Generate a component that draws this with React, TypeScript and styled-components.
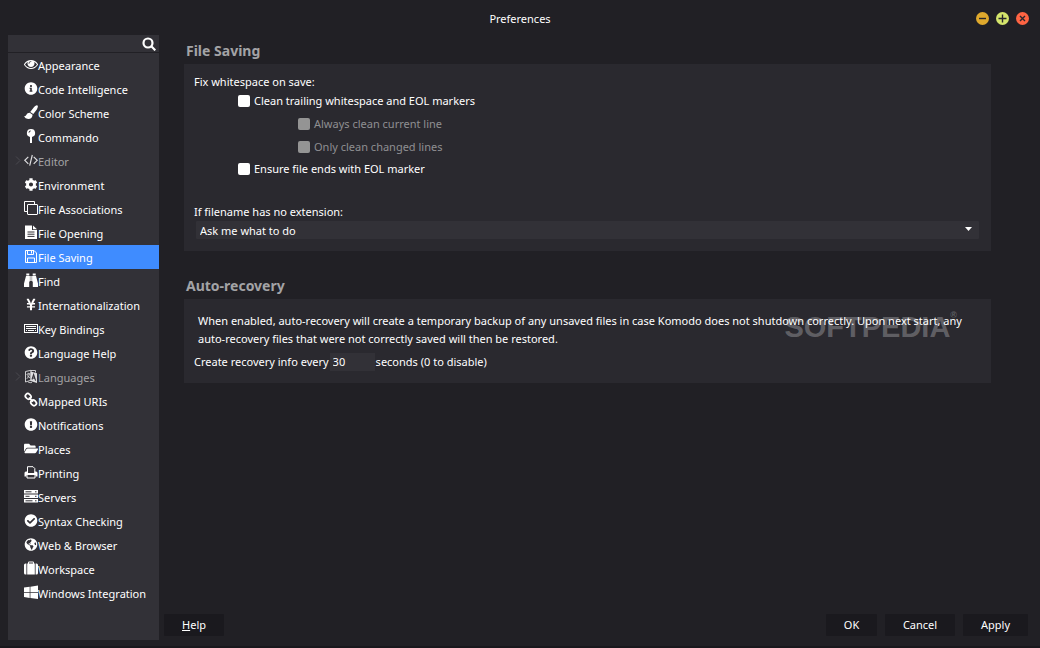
import React from "react";
import styled, { createGlobalStyle } from "styled-components";
import {
  FaInfoCircle, FaCog, FaYenSign, FaQuestionCircle, FaExclamationCircle,
  FaFolderOpen, FaCheckCircle, FaGlobeAmericas,
} from "react-icons/fa";

const color = {
  page: "#212025",
  side: "#323137",
  panel: "#2a292f",
  field: "#323137",
  button: "#1a191e",
  accent: "#3f8cff",
  text: "#ffffff",
  muted: "#a3a3a5",
  heading: "#a3a3a6",
};

const Global = createGlobalStyle`
  *, *::before, *::after { box-sizing: border-box; }
  body {
    margin: 0;
    background: ${color.page};
    color: ${color.text};
    font-family: "Noto Sans", "Open Sans", sans-serif;
    font-size: 11px;
    line-height: 18px;
  }
  button, input, select { font: inherit; color: inherit; }
`;

const Window = styled.div`
  display: flex;
  flex-direction: column;
  min-height: 100vh;
  border-bottom: 2px solid #19181d;
`;

const TitleBar = styled.header`
  display: grid;
  grid-template-columns: 1fr auto 1fr;
  align-items: center;
  height: 35px;
  padding: 2px 11px 0 11px;
`;

const Title = styled.h1`
  grid-column: 2;
  margin: 0;
  font-size: 11px;
  font-weight: 400;
`;

const WindowButtons = styled.div`
  display: flex;
  justify-content: flex-end;
  gap: 7px;
`;

const WindowButton = styled.button<{ $fill: string }>`
  display: flex;
  width: 13px;
  height: 13px;
  padding: 0;
  border: 0;
  border-radius: 50%;
  background: ${(p) => p.$fill};
  svg { width: 13px; height: 13px; fill: none; stroke: #28272c; stroke-width: 1.4; }
`;

const Body = styled.div`
  display: flex;
  flex: 1;
  gap: 5px;
  padding: 0 12px 6px 8px;
`;

const Sidebar = styled.aside`
  width: 151px;
  flex: none;
  background: ${color.side};
`;

const SearchBox = styled.label`
  display: flex;
  align-items: center;
  height: 18px;
  padding: 1px 3px 0 4px;
  border-bottom: 1px solid ${color.page};
  svg { flex: none; width: 14px; height: 14px; fill: none; stroke: #fff; stroke-width: 2.2; }
`;

const SearchInput = styled.input`
  flex: 1;
  min-width: 0;
  height: 16px;
  padding: 0;
  border: 0;
  outline: 0;
  background: transparent;
`;

const CategoryList = styled.ul`
  margin: 0;
  padding: 0;
  list-style: none;
`;

const Category = styled.a<{ $selected?: boolean; $muted?: boolean }>`
  display: flex;
  align-items: center;
  height: 24px;
  padding-top: 2px;
  color: ${(p) => (p.$muted ? color.muted : color.text)};
  background: ${(p) => (p.$selected ? color.accent : "transparent")};
  text-decoration: none;
  white-space: nowrap;
`;

const Twisty = styled.span`
  display: flex;
  width: 16px;
  padding: 0 0 4px 7px;
  svg { width: 6px; height: 9px; fill: none; stroke: #4b4a50; }
`;

const IconSlot = styled.span<{ $muted?: boolean }>`
  display: flex;
  justify-content: center;
  width: 14px;
  padding-bottom: 3px;
  color: ${(p) => (p.$muted ? "#dedee0" : color.text)};
  svg { flex: none; width: 14px; height: 13px; overflow: visible; }
`;

const Main = styled.main`
  display: flex;
  flex: 1;
  flex-direction: column;
  min-width: 0;
`;

const Sections = styled.div`
  display: flex;
  flex: 1;
  flex-direction: column;
  gap: 23px;
  padding: 4px 37px 0 20px;
`;

const Heading = styled.h2`
  margin: 0 0 2px;
  padding-left: 2px;
  color: ${color.heading};
  font-size: 14px;
  font-weight: 700;
  line-height: 23px;
`;

const Panel = styled.div`
  position: relative;
  padding: 9px 12px 12px 10px;
  background: ${color.panel};
`;

const Fieldset = styled.fieldset`
  display: flex;
  flex-direction: column;
  align-items: flex-start;
  margin: 0 0 23px;
  padding: 0;
  border: 0;
`;

const Legend = styled.legend`
  padding: 0;
  line-height: 17px;
`;

const CheckRow = styled.label<{ $nested?: boolean }>`
  display: flex;
  align-items: center;
  gap: 4px;
  height: ${(p) => (p.$nested ? 23 : 22)}px;
  margin-left: ${(p) => (p.$nested ? 104 : 44)}px;
  color: ${(p) => (p.$nested ? "#8f8f92" : color.text)};
`;

const CheckBox = styled.input`
  appearance: none;
  width: 12px;
  height: 12px;
  margin: 0;
  border-radius: 2px;
  background: #fff;
  &:disabled { background: #949494; }
  &:checked { box-shadow: inset 0 0 0 3px #fff; background: ${color.accent}; }
`;

const SelectLabel = styled.label`
  display: block;
`;

const SelectWrap = styled.div`
  display: flex;
  align-items: center;
  margin: 0 0 0 2px;
  background: ${color.field};
  border-radius: 1px;
  svg { flex: none; width: 7px; height: 4px; margin: 0 7px 2px -14px; fill: #fff; pointer-events: none; }
`;

const Select = styled.select`
  appearance: none;
  flex: 1;
  height: 18px;
  padding: 1px 20px 0 4px;
  border: 0;
  outline: 0;
  background: transparent;
`;

const Note = styled.p`
  position: relative;
  z-index: 1;
  margin: 4px 0 5px 4px;
`;

const IntervalRow = styled.div`
  display: flex;
  align-items: center;
  gap: 1px;
`;

const NumberInput = styled.input`
  width: 45px;
  height: 18px;
  padding: 0 3px;
  border: 0;
  outline: 0;
  background: ${color.field};
`;

const Watermark = styled.div`
  position: absolute;
  right: 34px;
  top: 8px;
  display: flex;
  color: rgba(255, 255, 255, 0.26);
  font-family: "Liberation Sans", Arial, sans-serif;
  font-size: 29px;
  font-weight: 700;
  line-height: 40px;
  pointer-events: none;
  sup { font-size: 9px; line-height: 16px; }
`;

const Footer = styled.footer`
  display: flex;
  gap: 8px;
  padding-bottom: 4px;
`;

const Spacer = styled.div`
  flex: 1;
`;

const DialogButton = styled.button<{ $width: number }>`
  width: ${(p) => p.$width}px;
  height: 22px;
  padding: 0;
  border: 0;
  border-radius: 1px;
  background: ${color.button};
`;

const EyeIcon = () => (
  <svg viewBox="0 128 1792 1664" fill="currentColor">
    <path d="M1664 960q-152-236-381-353 61 104 61 225 0 185-131.500 316.500t-316.500 131.500-316.500-131.500-131.500-316.500q0-121 61-225-229 117-381 353 133 205 333.500 326.500t434.500 121.500 434.500-121.500 333.500-326.500zm-720-384q0-20-14-34t-34-14q-125 0-214.500 89.500t-89.500 214.500q0 20 14 34t34 14 34-14 14-34q0-86 61-147t147-61q20 0 34-14t14-34zm848 384q0 34-20 69-140 230-376.500 368.500t-499.500 138.500-499.500-139-376.500-368q-20-35-20-69t20-69q140-229 376.500-368t499.500-139 499.500 139 376.500 368q20 35 20 69z" />
  </svg>
);

const BrushIcon = () => (
  <svg viewBox="0 0 14 13" fill="currentColor">
    <path d="M12.200-.6Q13.900-.9 13.900.6 13.800 1.800 12.800 3.400L9.300 8 6.200 6 9.900 1.200Q11.200-.3 12.200-.6zM5.700 6.700L8.600 8.700Q8.300 12.900 4.200 12.900 1.200 12.800 0 10.200 1.500 10.500 2.200 9 3.200 6.700 5.700 6.700z" />
  </svg>
);

const PinIcon = () => (
  <svg viewBox="0 0 14 13" fill="currentColor">
    <path fillRule="evenodd" d="M7 -1a4 4 0 0 1 1 7.900V13H6V6.900A4 4 0 0 1 7 -1zM6.800 .5A2.400 2.400 0 0 0 4.500 2.800h.8A1.600 1.600 0 0 1 6.800 1.200z" />
  </svg>
);

const CodeIcon = () => (
  <svg viewBox="0 0 14 13" fill="none" stroke="currentColor" strokeWidth="1.200">
    <path d="M4.300 2.800L.8 6.300l3.500 3.500M9.700 2.800l3.500 3.500-3.500 3.500M8.300 1L5.700 11.600" />
  </svg>
);

const CloneIcon = () => (
  <svg viewBox="0 0 14 13" fill="none" stroke="currentColor">
    <path d="M3.500 9.500h-3v-10h10v3" />
    <rect x="3.500" y="2.500" width="10" height="10" rx="0.500" />
  </svg>
);

const FileIcon = () => (
  <svg viewBox="0 0 14 13">
    <path d="M1-.5h7v4.500h5v9H1zM9-.5l4 3.700H9z" fill="currentColor" />
    <path d="M3.500 6h7M3.500 8.200h7M3.500 10.400h7" stroke={color.side} />
  </svg>
);

const FloppyIcon = () => (
  <svg viewBox="0 0 14 13" fill="none" stroke="currentColor">
    <path d="M1.500 .5h8.500l2.500 2.500v9.500h-11zM3.500 .5v4h6v-4M3.500 12.500v-4.500h7v4.500" />
    <path d="M7.500 1v2.500" />
  </svg>
);

const BinocularsIcon = () => (
  <svg viewBox="0 0 14 13" fill="currentColor">
    <path d="M2.300-.5h3v2h-3zM8.700-.5h3v2h-3zM2 2h3.900v5.500H5.200V13H0V9.500zM12 2H8.100v5.500h.7V13H14V9.500zM6.300 2h1.400v5H6.300z" />
  </svg>
);

const KeyboardIcon = () => (
  <svg viewBox="0 0 14 13" fill="none" stroke="currentColor">
    <rect x="0.500" y="2.500" width="13" height="8" />
    <path d="M2 4.500h10M2 6.500h10M4 8.500h6M2 8.500h1M11 8.500h1" />
  </svg>
);

const LanguageIcon = () => (
  <svg viewBox="0 0 14 13">
    <path d="M1.500 1.500L7 .3v9.900L1.500 12zM7 .5h4.500v2" fill="none" stroke="currentColor" strokeWidth="0.900" />
    <path d="M2.500 4.500l3.500-1M4.200 2.800v1.500M5.500 4Q5 7 2.800 8.800M3 5.500l3 2.500" fill="none" stroke="currentColor" strokeWidth="0.800" />
    <path d="M6.500 1.500L13 3.300v9.700L6.500 11z" fill="currentColor" />
    <path d="M8 9.500L9.600 4.500 11.600 10.700M8.500 7.800l2.400.7" fill="none" stroke={color.side} strokeWidth="1.100" />
    <path d="M4 12q2 1.200 4 .5" fill="none" stroke="currentColor" strokeWidth="0.800" />
  </svg>
);

const ChainIcon = () => (
  <svg viewBox="0 0 14 13" fill="none" stroke="currentColor" strokeWidth="1.700">
    <rect x="1.200" y="0" width="6" height="4.800" rx="2.400" transform="rotate(45 4.200 2.400)" />
    <rect x="6.600" y="6.400" width="6" height="4.800" rx="2.400" transform="rotate(45 9.600 8.800)" />
    <path d="M4.800 3.600l4.300 4" />
  </svg>
);

const PrintIcon = () => (
  <svg viewBox="0 0 14 13">
    <path d="M3.500 7V.7h5.500l1.800 1.800V7" fill="none" stroke="currentColor" />
    <path d="M2 5.500h1.500V7h7V5.500H12q1.500 0 1.500 1.500v3.500h-2V9H2.500v1.500h-2V7Q.5 5.500 2 5.500z" fill="currentColor" />
    <path d="M3 9v3h8V9" fill="none" stroke="currentColor" />
  </svg>
);

const ServersIcon = () => (
  <svg viewBox="0 0 14 13">
    <path d="M0 0h14v3.500H0zM0 4.500h14V8H0zM0 9h14v3.500H0z" fill="currentColor" />
    <path d="M1.500 1.800h6M1.500 6.300h4M1.500 10.800h7M11 1.800h1.500M11 6.300h1.500M11 10.800h1.500" stroke={color.side} />
  </svg>
);

const SuitcaseIcon = () => (
  <svg viewBox="0 0 14 13" fill="currentColor">
    <path d="M4 1.500V.8Q4-.5 5.300-.5h3.400Q10-.5 10 .8v.7H9V.5H5v1zM3.200 1.500h7.600v11H3.200zM2.400 1.500v11H1.500Q0 12.500 0 11V3q0-1.500 1.500-1.500zM11.600 1.500v11h.9q1.500 0 1.500-1.500V3q0-1.500-1.500-1.500z" />
  </svg>
);

const WindowsIcon = () => (
  <svg viewBox="0 0 14 13" fill="currentColor">
    <path d="M0 1.600L5.700.8V6H0zM6.400.7L14-.4V6H6.400zM0 6.700h5.700v5.200L0 11.100zM6.400 6.700H14v6.400L6.400 12z" />
  </svg>
);

const TwistyIcon = () => (
  <svg viewBox="0 0 6 9"><path d="M1 .5l4 4-4 4" /></svg>
);

type Item = { label: string; icon: React.ComponentType; parent?: boolean };

const items: Item[] = [
  { label: "Appearance", icon: EyeIcon },
  { label: "Code Intelligence", icon: FaInfoCircle },
  { label: "Color Scheme", icon: BrushIcon },
  { label: "Commando", icon: PinIcon },
  { label: "Editor", icon: CodeIcon, parent: true },
  { label: "Environment", icon: FaCog },
  { label: "File Associations", icon: CloneIcon },
  { label: "File Opening", icon: FileIcon },
  { label: "File Saving", icon: FloppyIcon },
  { label: "Find", icon: BinocularsIcon },
  { label: "Internationalization", icon: FaYenSign },
  { label: "Key Bindings", icon: KeyboardIcon },
  { label: "Language Help", icon: FaQuestionCircle },
  { label: "Languages", icon: LanguageIcon, parent: true },
  { label: "Mapped URIs", icon: ChainIcon },
  { label: "Notifications", icon: FaExclamationCircle },
  { label: "Places", icon: FaFolderOpen },
  { label: "Printing", icon: PrintIcon },
  { label: "Servers", icon: ServersIcon },
  { label: "Syntax Checking", icon: FaCheckCircle },
  { label: "Web & Browser", icon: FaGlobeAmericas },
  { label: "Workspace", icon: SuitcaseIcon },
  { label: "Windows Integration", icon: WindowsIcon },
];

export default function App() {
  return (
    <Window>
      <Global />
      <TitleBar>
        <Title>Preferences</Title>
        <WindowButtons>
          <WindowButton $fill="#dfa92d" aria-label="Minimize">
            <svg viewBox="0 0 13 13"><path d="M3 6.500h7" /></svg>
          </WindowButton>
          <WindowButton $fill="#d5e56c" aria-label="Maximize">
            <svg viewBox="0 0 13 13"><path d="M2.500 6.500h8M6.500 2.500v8" /></svg>
          </WindowButton>
          <WindowButton $fill="#ff6443" aria-label="Close">
            <svg viewBox="0 0 13 13"><path d="M4 4l5 5M9 4l-5 5" /></svg>
          </WindowButton>
        </WindowButtons>
      </TitleBar>
      <Body>
        <Sidebar>
          <SearchBox>
            <SearchInput type="text" aria-label="Search preferences" />
            <svg viewBox="0 0 14 14"><circle cx="6" cy="6" r="4.500" /><path d="M9.300 9.300l4 4" /></svg>
          </SearchBox>
          <CategoryList>
            {items.map(({ label, icon: Icon, parent }) => (
              <li key={label}>
                <Category href="#" $selected={label === "File Saving"} $muted={parent}>
                  <Twisty>{parent && <TwistyIcon />}</Twisty>
                  <IconSlot $muted={parent}><Icon /></IconSlot>
                  {label}
                </Category>
              </li>
            ))}
          </CategoryList>
        </Sidebar>
        <Main>
          <Sections>
            <section>
              <Heading>File Saving</Heading>
              <Panel>
                <Fieldset>
                  <Legend>Fix whitespace on save:</Legend>
                  <CheckRow><CheckBox type="checkbox" />Clean trailing whitespace and EOL markers</CheckRow>
                  <CheckRow $nested><CheckBox type="checkbox" disabled />Always clean current line</CheckRow>
                  <CheckRow $nested><CheckBox type="checkbox" disabled />Only clean changed lines</CheckRow>
                  <CheckRow><CheckBox type="checkbox" />Ensure file ends with EOL marker</CheckRow>
                </Fieldset>
                <SelectLabel htmlFor="no-extension">If filename has no extension:</SelectLabel>
                <SelectWrap>
                  <Select id="no-extension"><option>Ask me what to do</option></Select>
                  <svg viewBox="0 0 7 4"><path d="M0 0h7L3.500 4z" /></svg>
                </SelectWrap>
              </Panel>
            </section>
            <section>
              <Heading>Auto-recovery</Heading>
              <Panel>
                <Watermark>SOFTPEDIA<sup>®</sup></Watermark>
                <Note>
                  When enabled, auto-recovery will create a temporary backup of any unsaved files in case Komodo does not shutdown correctly. Upon next start, any auto-recovery files that were not correctly saved will then be restored.
                </Note>
                <IntervalRow>
                  <label htmlFor="interval">Create recovery info every</label>
                  <NumberInput id="interval" type="text" defaultValue="30" />
                  <span>seconds (0 to disable)</span>
                </IntervalRow>
              </Panel>
            </section>
          </Sections>
          <Footer>
            <DialogButton $width={60}><u>H</u>elp</DialogButton>
            <Spacer />
            <DialogButton $width={51}>OK</DialogButton>
            <DialogButton $width={70}>Cancel</DialogButton>
            <DialogButton $width={65}>Apply</DialogButton>
          </Footer>
        </Main>
      </Body>
    </Window>
  );
}
